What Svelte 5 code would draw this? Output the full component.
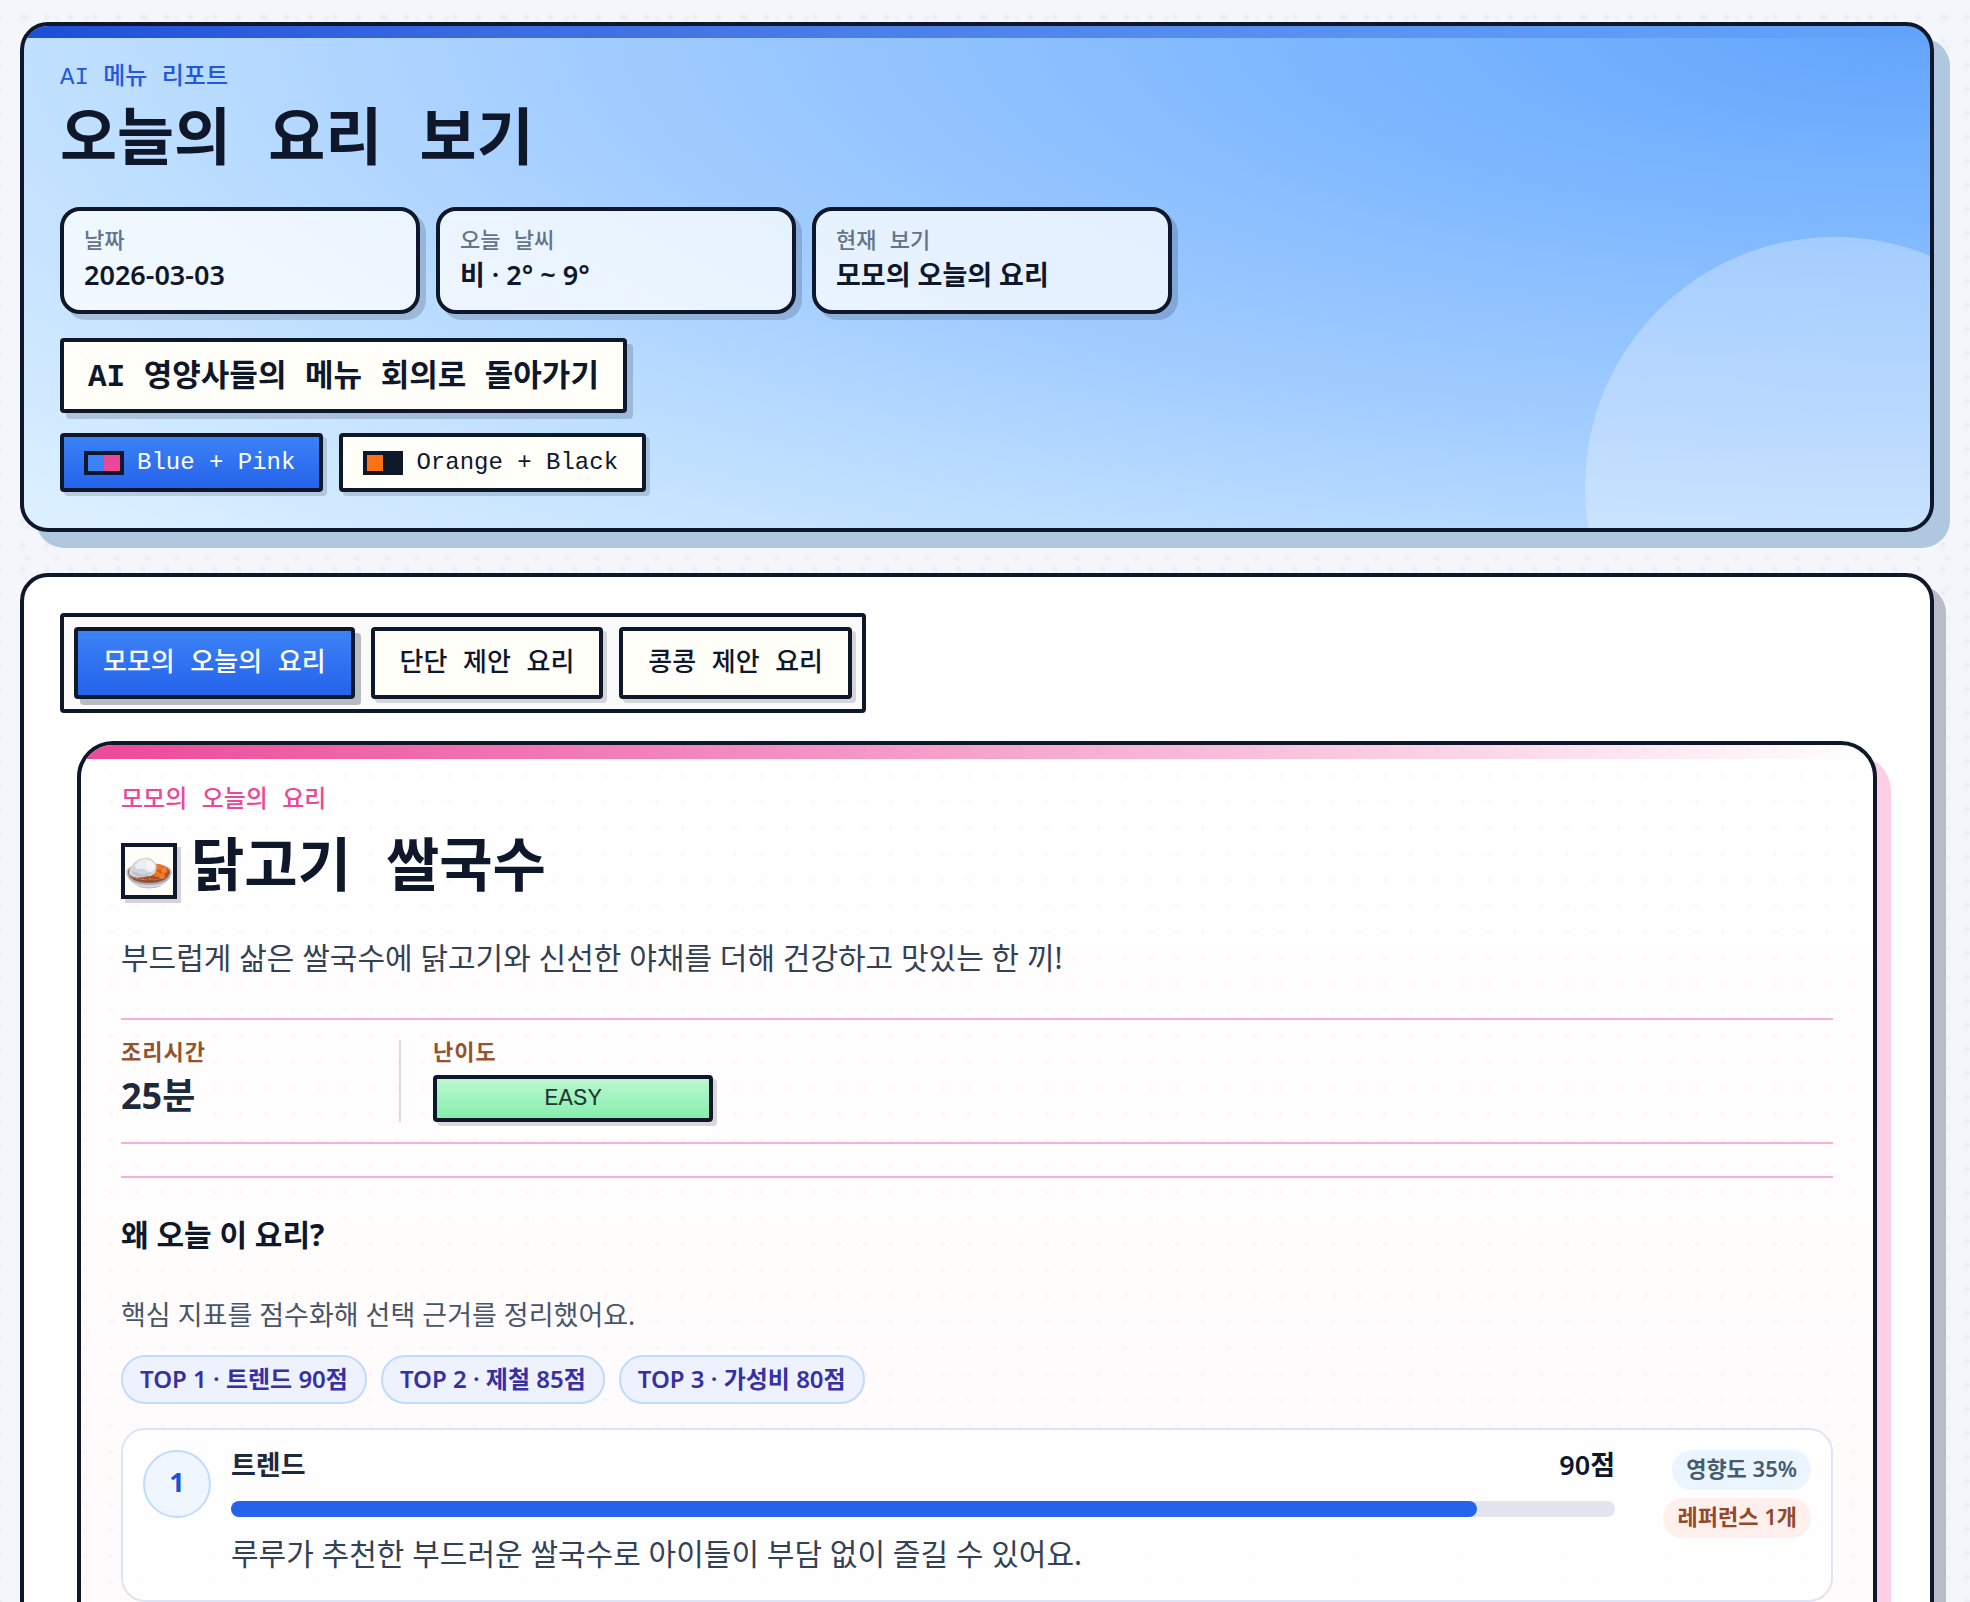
<!--
    App.svelte
    오늘의 요리 보기 화면
    - 상단: 날짜/날씨 요약, 돌아가기, 테마 선택
    - 하단: 요리 탭, 요리 카드, 선택 근거 점수
-->
<script>
    const summary = [
        { label: '날짜', value: '2026-03-03' },
        { label: '오늘 날씨', value: '비 · 2° ~ 9°' },
        { label: '현재 보기', value: '모모의 오늘의 요리' },
    ];

    const themes = [
        { id: 'blue-pink', name: 'Blue + Pink' },
        { id: 'orange-black', name: 'Orange + Black' },
    ];

    const tabs = ['모모의 오늘의 요리', '단단 제안 요리', '콩콩 제안 요리'];

    const tops = ['TOP 1 · 트렌드 90점', 'TOP 2 · 제철 85점', 'TOP 3 · 가성비 80점'];

    const reasons = [
        {
            rank: 1,
            name: '트렌드',
            score: 90,
            text: '루루가 추천한 부드러운 쌀국수로 아이들이 부담 없이 즐길 수 있어요.',
            impact: '영향도 35%',
            refs: '레퍼런스 1개',
        },
    ];

    let theme = $state('blue-pink');
    let activeTab = $state(0);
</script>

<main class="page">
    <header class="hero">
        <p class="eyebrow">AI 메뉴 리포트</p>
        <h1>오늘의 요리 보기</h1>

        <dl class="summary">
            {#each summary as item}
                <div class="summary-card">
                    <dt>{item.label}</dt>
                    <dd>{item.value}</dd>
                </div>
            {/each}
        </dl>

        <button class="pixel-btn back">AI 영양사들의 메뉴 회의로 돌아가기</button>

        <div class="themes">
            {#each themes as t}
                <button
                    class="pixel-btn theme"
                    class:active={theme === t.id}
                    aria-pressed={theme === t.id}
                    onclick={() => (theme = t.id)}
                >
                    <span class="swatch {t.id}"></span>
                    {t.name}
                </button>
            {/each}
        </div>
    </header>

    <section class="panel">
        <div class="tabs" role="tablist">
            {#each tabs as tab, i}
                <button
                    class="pixel-btn tab"
                    class:active={activeTab === i}
                    role="tab"
                    aria-selected={activeTab === i}
                    onclick={() => (activeTab = i)}
                >{tab}</button>
            {/each}
        </div>

        <article class="dish">
            <p class="eyebrow pink">모모의 오늘의 요리</p>
            <div class="dish-title">
                <span class="dish-icon">
                    <!-- 카레라이스 그릇 -->
                    <svg viewBox="0 0 48 48" aria-hidden="true">
                        <path d="M1 25c1 6 6 11 12 14 3 3 19 3 22 0 6-3 11-8 12-14z" fill="#a9afbd" />
                        <path d="M3 31c6 6 13 7 21 7s15-1 21-7c-3 4-7 7-11 8-6 2-14 2-20 0-4-1-8-4-11-8z" fill="#d5d9e1" />
                        <ellipse cx="24" cy="25" rx="23" ry="9" fill="#c3c8d3" />
                        <ellipse cx="24" cy="25" rx="21" ry="8" fill="#a5522c" />
                        <path d="M3 25c2 6 10 8 21 8s19-2 21-8c-1 7-9 11-21 11S4 32 3 25z" fill="#93522f" />
                        <path d="M29 18c6-1 13 1 15 6l-5 5H29z" fill="#c05a22" />
                        <circle cx="34" cy="20" r="3" fill="#f97316" />
                        <circle cx="39" cy="23" r="3" fill="#fb8124" />
                        <circle cx="32" cy="27" r="3" fill="#f97316" />
                        <circle cx="37" cy="29" r="3" fill="#ef7a2a" />
                        <circle cx="12" cy="31" r="1" fill="#e0793c" />
                        <circle cx="18" cy="32" r="1" fill="#e0793c" />
                        <circle cx="25" cy="32" r="1" fill="#e0793c" />
                        <path d="M4 26c0-4 2-6 4-9 3-4 7-6 12-6 5-1 9 2 11 6 1 3 1 6-1 9-3 4-8 3-12 4-5 1-12 1-14-4z" fill="#d2d5dd" />
                        <path d="M10 18c3-4 7-6 11-6 4 0 8 3 9 7 0 4-2 6-5 6-4 0-4-3-8-3-3 0-7 1-7-4z" fill="#edeef3" />
                        <path d="M23 14c4 0 7 3 7 6-1 3-4 4-6 2-3-2-4-7-1-8z" fill="#fbf3f6" />
                        <path d="M7 24c3 2 6 1 9 3 3 1 7 0 10-2-1 3-5 4-9 4-5 1-9-1-10-5z" fill="#bcc0cb" />
                    </svg>
                </span>
                <h2>닭고기 쌀국수</h2>
            </div>
            <p class="desc">부드럽게 삶은 쌀국수에 닭고기와 신선한 야채를 더해 건강하고 맛있는 한 끼!</p>

            <dl class="facts">
                <div class="fact">
                    <dt>조리시간</dt>
                    <dd class="time">25분</dd>
                </div>
                <div class="fact">
                    <dt>난이도</dt>
                    <dd class="level">EASY</dd>
                </div>
            </dl>

            <section class="why">
                <h3>왜 오늘 이 요리?</h3>
                <p class="why-sub">핵심 지표를 점수화해 선택 근거를 정리했어요.</p>

                <ul class="tops">
                    {#each tops as top}
                        <li>{top}</li>
                    {/each}
                </ul>

                {#each reasons as r}
                    <div class="reason">
                        <span class="rank">{r.rank}</span>
                        <div class="reason-body">
                            <div class="reason-head">
                                <strong>{r.name}</strong>
                                <strong class="score">{r.score}점</strong>
                            </div>
                            <div class="bar">
                                <div class="fill" style="width: {r.score}%"></div>
                            </div>
                            <p>{r.text}</p>
                        </div>
                        <div class="badges">
                            <span class="badge impact">{r.impact}</span>
                            <span class="badge refs">{r.refs}</span>
                        </div>
                    </div>
                {/each}
            </section>
        </article>
    </section>
</main>

<style>
:global(body) {
    margin: 0;
    background-color: #f4f6fc;
    background-image:
        radial-gradient(circle, #ebedf4 2px, transparent 3px),
        radial-gradient(circle, #eef0f6 2px, transparent 3px);
    background-size: 24px 24px, 30px 30px;
    background-position: 11px 5px, 12px 3px;
}
.page {
    --ink: #0f172a;
    --mono: "Liberation Mono", "Noto Sans CJK KR", monospace;
    padding: 22px 36px 22px 20px;
    color: var(--ink);
    font-family: "Noto Sans", "Noto Sans CJK KR", sans-serif;
}
.page * { box-sizing: border-box; }
h1, h2, h3, p, dl, dd, ul { margin: 0; padding: 0; }

/* 상단 히어로 */
.hero {
    position: relative; overflow: hidden;
    border: 4px solid var(--ink); border-radius: 28px;
    padding: 36px;
    background: radial-gradient(ellipse 130% 150% at top right, #62a4fb 0%, #7db7ff 25%, #a3cdff 55%, #bfdfff 75%, #dcf0ff 100%);
    box-shadow: 16px 16px 0 #afc8df;
}
.hero::before {
    content: ""; position: absolute; top: 0; left: 0; right: 0; height: 12px;
    background: linear-gradient(90deg, #1d4ed8, rgba(96,165,250,.3));
}
.hero::after {
    content: ""; position: absolute; right: -155px; bottom: -209px;
    width: 500px; height: 500px; border-radius: 50%;
    background: rgba(255,255,255,.28);
}
.eyebrow {
    font-family: var(--mono); font-size: 24px; line-height: 32px;
    font-weight: 500; color: #2458dc;
}
.eyebrow.pink { color: #ec4899; }
h1 {
    margin: 14px 0 27px;
    font-family: var(--mono); font-size: 62px; line-height: 72px; font-weight: 700;
}
.summary { display: flex; gap: 16px; }
.summary-card {
    width: 360px; padding: 18px 20px;
    border: 4px solid var(--ink); border-radius: 20px;
    background: rgba(255,255,255,.75);
    box-shadow: 6px 6px 0 rgba(15,23,42,.18);
}
.summary dt { font-family: var(--mono); font-size: 22px; line-height: 28px; font-weight: 500; color: #64748b; }
.summary dd { font-size: 27px; line-height: 35px; font-weight: 600; }

/* 픽셀 버튼 공통 */
.pixel-btn {
    border: 4px solid var(--ink); border-radius: 4px;
    background: #fffef9; color: var(--ink);
    font-family: var(--mono); cursor: pointer;
    box-shadow: 4px 4px 0 rgba(15,23,42,.16);
}
.pixel-btn.active { background: linear-gradient(#3b82f6, #2563eb); color: #fff; }
.back {
    display: block; margin: 24px 0 20px; padding: 0 24px 6px; height: 75px;
    font-size: 31px; font-weight: 700;
    box-shadow: 6px 6px 0 rgba(15,23,42,.18);
}
.themes { display: flex; gap: 16px; }
.theme {
    display: flex; align-items: center; gap: 13px;
    height: 59px; padding: 0 24px 0 20px; font-size: 24px;
}
.swatch { width: 40px; height: 24px; border: 4px solid var(--ink); }
.swatch.blue-pink { background: linear-gradient(90deg, #3b82f6 50%, #ec4899 50%); }
.swatch.orange-black { background: linear-gradient(90deg, #f97316 50%, #0f172a 50%); }

/* 본문 패널 */
.panel {
    margin-top: 41px; padding: 36px;
    border: 4px solid var(--ink); border-radius: 28px;
    background: #fff; box-shadow: 12px 12px 0 #b7bcc7;
}
.tabs {
    display: inline-flex; gap: 16px; padding: 10px;
    border: 4px solid var(--ink); border-radius: 4px; background: #fafafb;
    vertical-align: top;
}
.tab { height: 72px; padding: 0 25px 6px; font-size: 26px; font-weight: 500; }
.tab.active { box-shadow: 6px 6px 0 rgba(15,23,42,.28); }

/* 요리 카드 */
.dish {
    position: relative; overflow: hidden;
    max-width: 1800px; margin: 28px auto 0; padding: 40px;
    border: 4px solid var(--ink); border-radius: 36px;
    background:
        radial-gradient(circle, rgba(15,23,42,.018) 2px, transparent 3px) -9px -8px / 26px 26px,
        linear-gradient(#fff, #fffafb);
    background-clip: padding-box;
    box-shadow: 14px 14px 0 #fccfe4;
}
.dish::before {
    content: ""; position: absolute; top: 0; left: 0; right: 0; height: 14px;
    background: linear-gradient(90deg, #ec4899, rgba(255,255,255,0));
}
.dish-title { display: flex; align-items: center; gap: 14px; margin-top: 22px; }
.dish-icon {
    width: 56px; height: 56px;
    border: 4px solid var(--ink); background: #fffdf8;
    box-shadow: 4px 4px 0 rgba(15,23,42,.18);
}
.dish-icon svg { display: block; width: 100%; height: 100%; }
h2 { font-family: var(--mono); font-size: 58px; line-height: 64px; font-weight: 700; }
.desc { margin: 31px 0 36px; font-size: 30px; line-height: 48px; color: #334155; }

.facts {
    display: flex; gap: 32px; padding: 20px 0;
    border-top: 2px solid #f9b0d5; border-bottom: 2px solid #f9b0d5;
}
.fact { width: 280px; }
.fact:first-child { border-right: 2px solid #d8dae3; }
.fact dt { font-size: 22px; line-height: 22px; font-weight: 600; letter-spacing: 1px; color: #92532f; }
.fact dd { margin-top: 13px; }
.time { font-size: 36px; line-height: 42px; font-weight: 700; color: #1e293b; }
.level {
    height: 47px; border: 4px solid var(--ink); border-radius: 4px;
    background: linear-gradient(#bbf7d0, #86efac);
    box-shadow: 4px 4px 0 rgba(15,23,42,.16);
    font-family: var(--mono); font-size: 24px; line-height: 39px; text-align: center; color: #1f3a33;
}

/* 선택 근거 */
.why { margin-top: 32px; padding-top: 32px; border-top: 2px solid #f9b0d5; }
h3 { font-size: 30px; line-height: 50px; font-weight: 700; }
.why-sub { margin: 34px 0 19px; font-size: 27px; line-height: 42px; color: #475569; }
.tops { display: flex; gap: 14px; list-style: none; }
.tops li {
    padding: 7px 17px 9px; border: 2px solid #bfdbfe; border-radius: 24px;
    background: #eef2ff; color: #3730a3;
    font-size: 24px; line-height: 29px; font-weight: 600;
}
.reason {
    display: flex; gap: 20px; margin-top: 24px; padding: 20px;
    border: 2px solid #e0e4f2; border-radius: 24px; background: rgba(255,255,255,.8);
}
.rank {
    flex: none; width: 68px; height: 68px;
    border: 2px solid #bfdbfe; border-radius: 50%; background: #eff6ff;
    color: #1d4ed8; font-size: 27px; line-height: 60px; font-weight: 700; text-align: center;
}
.reason-body { flex: 1; }
.reason-head { display: flex; justify-content: space-between; font-size: 27px; line-height: 30px; }
.reason-head strong { font-weight: 600; color: #1e293b; }
.reason-head .score { color: var(--ink); }
.bar { height: 16px; margin: 21px 0 11px; border-radius: 8px; background: #e2e5ee; }
.fill { height: 100%; border-radius: 8px; background: #2563eb; }
.reason-body p { font-size: 30px; line-height: 52px; color: #334155; }
.badges { width: 176px; display: flex; flex-direction: column; align-items: flex-end; gap: 8px; }
.badge { padding: 0 14px 4px; border-radius: 20px; font-size: 22px; line-height: 36px; font-weight: 600; }
.impact { background: #eaf5ff; color: #475b70; }
.refs { background: #fff0ee; color: #92492c; }
</style>
